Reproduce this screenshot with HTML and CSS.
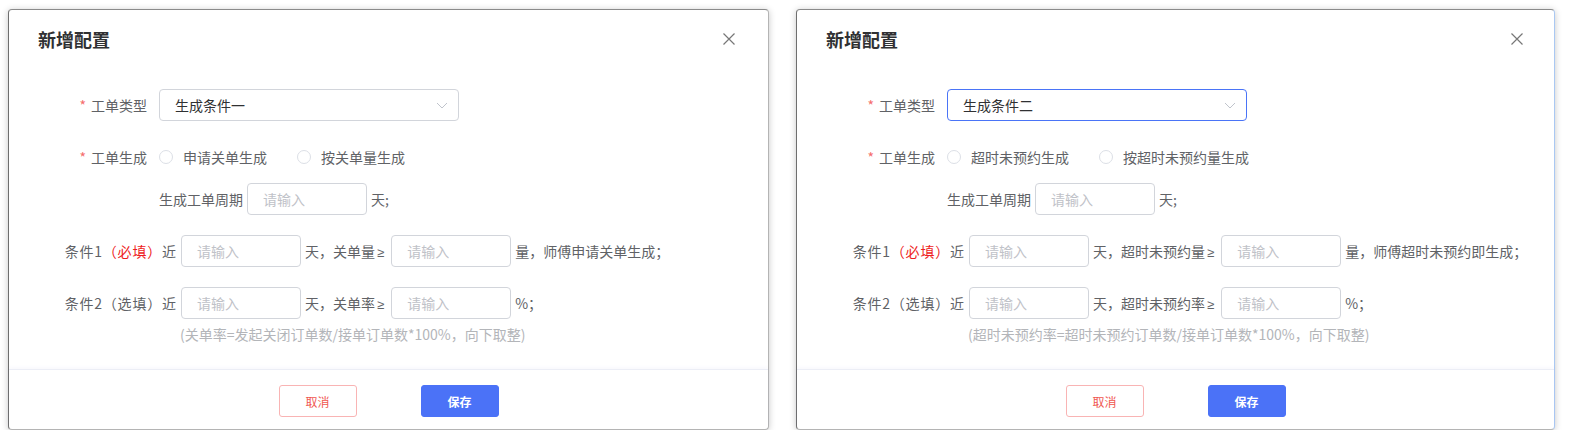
FILE: index.html
```html
<!DOCTYPE html>
<html lang="zh-CN">
<head>
<meta charset="utf-8">
<title>新增配置</title>
<link rel="stylesheet" href="styles.css">
</head>
<body>
<div class="page">
  <section class="dialog">
    <header class="dlg-head">
      <h2 class="dlg-title">新增配置</h2>
      <span class="close"><svg width="12" height="12" viewBox="0 0 12 12"><path d="M0.5 0.5L11.5 11.5M11.5 0.5L0.5 11.5" fill="none" stroke="#777" stroke-width="1.2"/></svg></span>
    </header>
    <div class="dlg-body">
      <div class="row r1">
        <label class="lbl"><span class="req">*</span>工单类型</label>
        <div class="select"><span class="sel-val">生成条件一</span><svg class="chev" width="12" height="7" viewBox="0 0 12 7"><path d="M1 1L6 6L11 1" fill="none" stroke="#c0c4cc" stroke-width="1"/></svg></div>
      </div>
      <div class="row r2">
        <label class="lbl"><span class="req">*</span>工单生成</label>
        <div class="radios">
          <span class="radio"><i class="circle"></i>申请关单生成</span>
          <span class="radio"><i class="circle"></i>按关单量生成</span>
        </div>
      </div>
      <div class="row r3">
        <span class="txt">生成工单周期</span>
        <input class="inp" placeholder="请输入">
        <span class="txt">天;</span>
      </div>
      <div class="row r4">
        <span class="clbl">条件1<em class="must">（必填）</em></span>
        <span class="txt">近</span>
        <input class="inp" placeholder="请输入">
        <span class="txt">天，关单量<span class="ge">≥</span></span>
        <input class="inp" placeholder="请输入">
        <span class="txt">量，师傅申请关单生成；</span>
      </div>
      <div class="row r4">
        <span class="clbl">条件2（选填）</span>
        <span class="txt">近</span>
        <input class="inp" placeholder="请输入">
        <span class="txt">天，关单率<span class="ge">≥</span></span>
        <input class="inp" placeholder="请输入">
        <span class="txt">%；</span>
      </div>
      <div class="hint">(关单率=发起关闭订单数/接单订单数*100%，向下取整)</div>
    </div>
    <footer class="dlg-foot">
      <button class="btn cancel">取消</button>
      <button class="btn save">保存</button>
    </footer>
  </section>

  <section class="dialog dialog-b">
    <header class="dlg-head">
      <h2 class="dlg-title">新增配置</h2>
      <span class="close"><svg width="12" height="12" viewBox="0 0 12 12"><path d="M0.5 0.5L11.5 11.5M11.5 0.5L0.5 11.5" fill="none" stroke="#777" stroke-width="1.2"/></svg></span>
    </header>
    <div class="dlg-body">
      <div class="row r1">
        <label class="lbl"><span class="req">*</span>工单类型</label>
        <div class="select focus"><span class="sel-val">生成条件二</span><svg class="chev" width="12" height="7" viewBox="0 0 12 7"><path d="M1 1L6 6L11 1" fill="none" stroke="#c0c4cc" stroke-width="1"/></svg></div>
      </div>
      <div class="row r2">
        <label class="lbl"><span class="req">*</span>工单生成</label>
        <div class="radios">
          <span class="radio"><i class="circle"></i>超时未预约生成</span>
          <span class="radio"><i class="circle"></i>按超时未预约量生成</span>
        </div>
      </div>
      <div class="row r3">
        <span class="txt">生成工单周期</span>
        <input class="inp" placeholder="请输入">
        <span class="txt">天;</span>
      </div>
      <div class="row r4">
        <span class="clbl">条件1<em class="must">（必填）</em></span>
        <span class="txt">近</span>
        <input class="inp" placeholder="请输入">
        <span class="txt">天，超时未预约量<span class="ge">≥</span></span>
        <input class="inp" placeholder="请输入">
        <span class="txt">量，师傅超时未预约即生成；</span>
      </div>
      <div class="row r4">
        <span class="clbl">条件2（选填）</span>
        <span class="txt">近</span>
        <input class="inp" placeholder="请输入">
        <span class="txt">天，超时未预约率<span class="ge">≥</span></span>
        <input class="inp" placeholder="请输入">
        <span class="txt">%；</span>
      </div>
      <div class="hint">(超时未预约率=超时未预约订单数/接单订单数*100%，向下取整)</div>
    </div>
    <footer class="dlg-foot">
      <button class="btn cancel">取消</button>
      <button class="btn save">保存</button>
    </footer>
  </section>
</div>
</body>
</html>
```
FILE: styles.css
```css
* { box-sizing: border-box; }
html, body { margin: 0; padding: 0; background: #fff; }
body {
  font-family: "Noto Sans CJK SC", "Microsoft YaHei", sans-serif;
  font-size: 14px;
  color: #606266;
}
.page {
  display: flex;
  gap: 27px;
  padding: 9px 0 0 8px;
}
.dialog {
  width: 761px;
  height: 421px;
  display: flex;
  flex-direction: column;
  background: #fff;
  border: 1px solid #b4b4b4;
  border-top-color: #8a8a8a;
  border-left-color: #6e6e6e;
  border-radius: 4px;
  box-shadow: 0 1px 7px rgba(0, 0, 0, 0.22);
}
.dialog-b {
  width: 759px;
  border-right-color: #aac8f2;
}
.dlg-head {
  height: 58px;
  display: flex;
  align-items: center;
  padding: 0 33px 0 29px;
}
.dialog-b .dlg-head { padding-right: 31px; }
.dlg-title {
  margin: 0;
  font-size: 18px;
  font-weight: 700;
  color: #303133;
  line-height: 24px;
}
.close {
  margin-left: auto;
  display: flex;
  width: 12px;
  height: 12px;
}
.dlg-body {
  flex: 1;
  padding-top: 21px;
}
.row {
  display: flex;
  align-items: center;
  height: 32px;
}
.r2 { margin-top: 20px; }
.r3 { margin-top: 10px; padding-left: 150px; }
.r4 { margin-top: 20px; }
.lbl {
  width: 138px;
  margin-right: 12px;
  text-align: right;
  white-space: nowrap;
}
.req {
  color: #f56c6c;
  margin-right: 5px;
}
.select {
  width: 300px;
  height: 32px;
  border: 1px solid #d2d5db;
  border-radius: 4px;
  display: flex;
  align-items: center;
  padding: 0 10px 0 15px;
  color: #303133;
}
.select.focus { border-color: #4a74f7; }
.chev { margin-left: auto; }
.radios { display: flex; align-items: center; }
.radio {
  display: inline-flex;
  align-items: center;
  margin-right: 30px;
  white-space: nowrap;
}
.circle {
  width: 14px;
  height: 14px;
  border: 1px solid #dcdfe6;
  border-radius: 50%;
  margin-right: 10px;
  background: #fff;
}
.txt { white-space: nowrap; }
.ge {
  font-family: "Liberation Sans", sans-serif;
  font-size: 13px;
  margin: 0 2px 0 2px;
}
.inp {
  width: 120px;
  height: 32px;
  border: 1px solid #d2d5db;
  border-radius: 4px;
  padding: 0 15px;
  font: inherit;
  color: #606266;
  margin: 0 4px 0 5px;
  outline: none;
}
.r3 .inp { margin-left: 4px; }
.inp::placeholder { color: #bfc2c8; }
.clbl {
  width: 153px;
  text-align: right;
  white-space: nowrap;
  letter-spacing: 0.8px;
}
.must {
  font-style: normal;
  color: #ee1d23;
}
.hint {
  margin-top: 5px;
  padding-left: 171px;
  line-height: 20px;
  color: #b3b5b9;
  white-space: nowrap;
}
.dlg-foot {
  height: 60px;
  border-top: 1px solid #eceef6;
  box-shadow: 0 -2px 3px rgba(90, 110, 200, 0.04);
  display: flex;
  justify-content: center;
  gap: 64px;
  padding-top: 15px;
}
.btn {
  width: 78px;
  height: 32px;
  border-radius: 3px;
  font-family: inherit;
  font-size: 12px;
  cursor: pointer;
  padding: 0;
}
.cancel {
  background: #fff;
  border: 1px solid #f9b4b4;
  color: #f0564f;
}
.save {
  background: #4b72f7;
  border: 1px solid #4b72f7;
  color: #fff;
  font-weight: 700;
}
```
